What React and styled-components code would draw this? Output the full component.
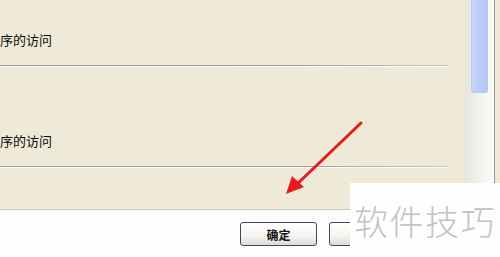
import React from 'react';
import styled, { createGlobalStyle } from 'styled-components';

const Global = createGlobalStyle`
  html, body { margin: 0; padding: 0; background: #fdfdfd; }
  body { font-family: "Noto Sans CJK SC", "Noto Sans", sans-serif; }
`;

const Screen = styled.div`
  position: relative;
  width: 500px;
  height: 257px;
  overflow: hidden;
  display: flex;
  flex-direction: column;
  background: #fdfdfd;
`;

const Panel = styled.div`
  height: 210px;
  flex-shrink: 0;
  display: flex;
  overflow: hidden;
  background: #efe9d8;
  border-bottom: 1px solid #c9c5b6;
  box-sizing: border-box;
`;

const List = styled.div`
  flex: 1;
  display: flex;
  flex-direction: column;
  padding-top: 32px;
`;

const Section = styled.div`
  height: 101px;
  flex-shrink: 0;
  display: flex;
  flex-direction: column;
`;

const Label = styled.div`
  font-size: 13px;
  line-height: 15px;
  color: #0c0c0c;
  height: 33px;
  overflow: hidden;
`;

const Rule = styled.div`
  width: 448px;
  height: 1px;
  background: linear-gradient(90deg, #9c9ca6 0%, #9fa4a8 70%, #c8c8c0 100%);
  border-bottom: 1px solid #fbfbf6;
`;

const Scroll = styled.div`
  width: 30px;
  display: flex;
  flex-direction: column;
  background: linear-gradient(90deg, #e7e6de 0%, #f4f4f0 60%, #fbfbf8 100%);
  border-right: 1px solid #9a9a9a;
  padding-left: 6px;
  box-sizing: border-box;
  margin-right: 5px;
`;

const Thumb = styled.div`
  width: 17px;
  height: 93px;
  border: 1px solid #b9c9f0;
  border-top: none;
  border-radius: 0 0 3px 3px;
  background: linear-gradient(90deg, #c5d5fb 0%, #bacdfa 50%, #b3c6f6 100%);
  box-sizing: border-box;
`;

const Footer = styled.div`
  flex: 1;
  display: flex;
  align-items: flex-start;
  padding: 12px 0 0 240px;
  gap: 12px;
`;

const Button = styled.button`
  width: 77px;
  height: 24px;
  border: 1px solid #3d4a5c;
  border-radius: 3px;
  background: linear-gradient(180deg, #ffffff 0%, #f4f4f0 60%, #dcdcd6 100%);
  font-family: "Noto Sans CJK SC", sans-serif;
  font-size: 12px;
  font-weight: 700;
  color: #111;
  padding: 0;
`;

const Watermark = styled.div`
  position: absolute;
  left: 350px;
  top: 183px;
  width: 150px;
  height: 74px;
  background: #fefefe;
  display: flex;
  align-items: center;
  padding-left: 4px;
  box-sizing: border-box;
  font-size: 34px;
  letter-spacing: 1.5px;
  color: #c2c2c2;
  font-family: "Noto Sans CJK SC", sans-serif;
  font-weight: 300;
`;

const Arrow = styled.svg`
  position: absolute;
  left: 280px;
  top: 115px;
`;

export default function App() {
  return (
    <Screen>
      <Global />
      <Panel>
        <List>
          <Section>
            <Label>序的访问</Label>
            <Rule />
          </Section>
          <Section>
            <Label>序的访问</Label>
            <Rule />
          </Section>
        </List>
        <Scroll>
          <Thumb />
        </Scroll>
      </Panel>
      <Footer>
        <Button>确定</Button>
        <Button />
      </Footer>
      <Arrow width="90" height="85" viewBox="0 0 90 85">
        <line x1="81" y1="8" x2="14" y2="72" stroke="#e41c1c" strokeWidth="3" strokeLinecap="round" />
        <polygon points="6,79 12,61 24,72" fill="#e41c1c" />
      </Arrow>
      <Watermark>软件技巧</Watermark>
    </Screen>
  );
}
